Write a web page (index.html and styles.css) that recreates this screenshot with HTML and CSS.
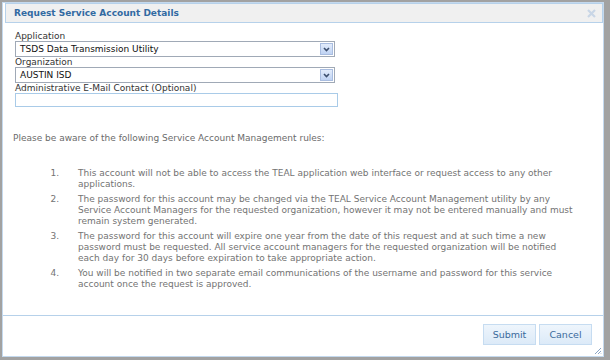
FILE: index.html
```html
<!DOCTYPE html>
<html lang="en">

<head>
    <meta charset="UTF-8">
    <meta name="viewport" content="width=device-width, initial-scale=1.0">
    <title>Request Service Account Details</title>
    <link rel="stylesheet" href="styles.css">
</head>

<body>
    <div class="dialog">
        <div class="titlebar">
            <span class="title">Request Service Account Details</span>
            <svg class="close" width="9" height="9" viewBox="0 0 9 9">
                <path d="M1 1L8 8M8 1L1 8" stroke="#c9d6e6" stroke-width="2.2" />
            </svg>
        </div>

        <div class="content">
            <div class="form">
                <label>Application</label>
                <div class="select">
                    <span>TSDS Data Transmission Utility</span>
                    <span class="arrow"><svg width="7" height="5" viewBox="0 0 7 5"><path d="M1 1L3.5 3.5L6 1" fill="none" stroke="#3d4f6e" stroke-width="1.6" /></svg></span>
                </div>
                <label>Organization</label>
                <div class="select">
                    <span>AUSTIN ISD</span>
                    <span class="arrow"><svg width="7" height="5" viewBox="0 0 7 5"><path d="M1 1L3.5 3.5L6 1" fill="none" stroke="#3d4f6e" stroke-width="1.6" /></svg></span>
                </div>
                <label>Administrative E-Mail Contact (Optional)</label>
                <input type="text" class="email">
            </div>

            <p class="intro">Please be aware of the following Service Account Management rules:</p>

            <ol class="rules">
                <li><span class="num">1.</span><span class="txt">This account will not be able to access the TEAL application web interface or request access to any other applications.</span></li>
                <li><span class="num">2.</span><span class="txt">The password for this account may be changed via the TEAL Service Account Management utility by any Service Account Managers for the requested organization, however it may not be entered manually and must remain system generated.</span></li>
                <li><span class="num">3.</span><span class="txt">The password for this account will expire one year from the date of this request and at such time a new password must be requested. All service account managers for the requested organization will be notified each day for 30 days before expiration to take appropriate action.</span></li>
                <li><span class="num">4.</span><span class="txt">You will be notified in two separate email communications of the username and password for this service account once the request is approved.</span></li>
            </ol>
        </div>

        <div class="footer">
            <button type="button">Submit</button>
            <button type="button">Cancel</button>
            <svg class="grip" width="8" height="8" viewBox="0 0 8 8">
                <path d="M7 1L1 7M7 4L4 7M7 6.5L6.5 7" stroke="#8aa4c4" stroke-width="1" />
            </svg>
        </div>
    </div>
</body>

</html>
```

FILE: styles.css
```css
* {
    margin: 0;
    padding: 0;
    box-sizing: border-box;
}

body {
    font-family: "DejaVu Sans", Verdana, sans-serif;
    font-size: 9px;
    background: #a2a2a2;
    width: 610px;
    height: 360px;
    padding: 2px 6px 3px 2px;
    overflow: hidden;
}

.dialog {
    height: 355px;
    background: white;
    border: 1px solid #c4d9ee;
    display: flex;
    flex-direction: column;
}

.titlebar {
    height: 20px;
    margin: 0 0 0 2px;
    background: #f0f0f0;
    border: 1px solid #b6d1ea;
    display: flex;
    align-items: center;
    justify-content: space-between;
    padding: 0 6px 0 8px;
}

.title {
    font-weight: bold;
    color: #326aa2;
}

.content {
    flex: 1;
    padding: 8px 10px 0 10px;
}

.form {
    margin-left: 2px;
    display: flex;
    flex-direction: column;
    align-items: flex-start;
}

.form label {
    color: #333;
    line-height: 10px;
}

.select {
    width: 320px;
    height: 16px;
    border: 1px solid #a0a9b6;
    display: flex;
    align-items: center;
    justify-content: space-between;
    padding: 0 1px 0 4px;
    color: #111;
}

.select .arrow {
    width: 13px;
    height: 12px;
    border: 1px solid #a9bde0;
    background: linear-gradient(#e2ecfb, #bfd3f3);
    display: flex;
    align-items: center;
    justify-content: center;
}

.email {
    width: 323px;
    height: 14px;
    border: 1px solid #a9cbe8;
}

.intro {
    margin-top: 26px;
    color: #6b6b6b;
    line-height: 11px;
}

.rules {
    list-style: none;
    margin-top: 24px;
    color: #737373;
    line-height: 11px;
}

.rules li {
    display: flex;
    margin-bottom: 4px;
}

.rules .num {
    width: 46px;
    flex-shrink: 0;
    text-align: right;
    margin-right: 19px;
}

.rules .txt {
    width: 498px;
}

.footer {
    height: 41px;
    border-top: 1px solid #b6d1ea;
    display: flex;
    justify-content: flex-end;
    align-items: flex-start;
    gap: 3px;
    padding: 8px 11px 0 0;
    position: relative;
}

.footer button {
    font-family: "DejaVu Sans", Verdana, sans-serif;
    font-size: 9.5px;
    width: 53px;
    height: 21px;
    color: #3b6a9c;
    background: linear-gradient(#eef5fc, #dceaf8);
    border: 1px solid #c6dcf1;
}

.grip {
    position: absolute;
    right: 1px;
    bottom: 1px;
}
```
